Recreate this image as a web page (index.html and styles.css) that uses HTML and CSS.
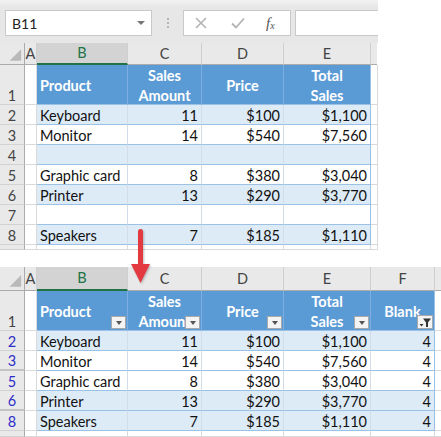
FILE: index.html
```html
<!DOCTYPE html>
<html>
<head>
<meta charset="utf-8">
<link rel="stylesheet" href="styles.css">
</head>
<body>
<div class="toolbar">
  <div class="namebox"><span>B11</span><span class="caret"></span></div>
  <div class="grip"><i></i><i></i><i></i></div>
  <div class="fxbox">
    <svg class="ico-x" width="12" height="12" viewBox="0 0 12 12"><path d="M1 1L11 11M11 1L1 11" stroke="#b3b3b3" stroke-width="1.6" fill="none"/></svg>
    <svg class="ico-ok" width="14" height="12" viewBox="0 0 14 12"><path d="M1 6.5L5 10.5L13 1.5" stroke="#b3b3b3" stroke-width="1.8" fill="none"/></svg>
    <span class="fx">f<sub>x</sub></span>
  </div>
  <div class="formula"></div>
</div>

<div class="sheet top">
  <div class="c corner"><svg width="25" height="22" viewBox="0 0 25 22"><path d="M10 19L22 7V19Z" fill="#b9b9b9"/></svg></div>
  <div class="c ch">A</div>
  <div class="c ch sel">B</div>
  <div class="c ch">C</div>
  <div class="c ch">D</div>
  <div class="c ch">E</div>
  <div class="c ch end"></div>

  <div class="c rh">1</div><div class="c e"></div>
  <div class="c hd l">Product</div><div class="c hd">Sales<br>Amount</div><div class="c hd">Price</div><div class="c hd last">Total<br>Sales</div><div class="c e"></div>

  <div class="c rh">2</div><div class="c e"></div>
  <div class="c d band">Keyboard</div><div class="c d band num">11</div><div class="c d band num">$100</div><div class="c d band num last">$1,100</div><div class="c e"></div>

  <div class="c rh">3</div><div class="c e"></div>
  <div class="c d">Monitor</div><div class="c d num">14</div><div class="c d num">$540</div><div class="c d num last">$7,560</div><div class="c e"></div>

  <div class="c rh">4</div><div class="c e"></div>
  <div class="c d band"></div><div class="c d band"></div><div class="c d band"></div><div class="c d band last"></div><div class="c e"></div>

  <div class="c rh">5</div><div class="c e"></div>
  <div class="c d">Graphic card</div><div class="c d num">8</div><div class="c d num">$380</div><div class="c d num last">$3,040</div><div class="c e"></div>

  <div class="c rh">6</div><div class="c e"></div>
  <div class="c d band">Printer</div><div class="c d band num">13</div><div class="c d band num">$290</div><div class="c d band num last">$3,770</div><div class="c e"></div>

  <div class="c rh">7</div><div class="c e"></div>
  <div class="c d"></div><div class="c d"></div><div class="c d"></div><div class="c d last"></div><div class="c e"></div>

  <div class="c rh">8</div><div class="c e"></div>
  <div class="c d band">Speakers</div><div class="c d band num">7</div><div class="c d band num">$185</div><div class="c d band num last">$1,110</div><div class="c e"></div>

  <div class="c rh"></div><div class="c e"></div><div class="c e"></div><div class="c e"></div><div class="c e"></div><div class="c e"></div><div class="c e"></div>
</div>

<div class="sheet bottom">
  <div class="c corner"><svg width="25" height="24" viewBox="0 0 25 24"><path d="M10 21L22 9V21Z" fill="#b9b9b9"/></svg></div>
  <div class="c ch">A</div>
  <div class="c ch sel">B</div>
  <div class="c ch">C</div>
  <div class="c ch">D</div>
  <div class="c ch">E</div>
  <div class="c ch">F</div>
  <div class="c ch end"></div>

  <div class="c rh">1</div><div class="c e"></div>
  <div class="c hd l">Product<span class="fb"></span></div>
  <div class="c hd">Sales<br>Amount<span class="fb"></span></div>
  <div class="c hd">Price<span class="fb"></span></div>
  <div class="c hd">Total<br>Sales<span class="fb"></span></div>
  <div class="c hd last">Blank<span class="fb on"><svg width="13" height="11" viewBox="0 0 13 11"><path d="M4 1.5H12L9 5.5V10H7V5.5Z" fill="#333"/><path d="M0.5 7H4.5L2.5 9.5Z" fill="#333"/></svg></span></div>
  <div class="c e"></div>

  <div class="c rh blue">2</div><div class="c e"></div>
  <div class="c d band">Keyboard</div><div class="c d band num">11</div><div class="c d band num">$100</div><div class="c d band num">$1,100</div><div class="c d band num last">4</div><div class="c e"></div>

  <div class="c rh blue hid">3</div><div class="c e"></div>
  <div class="c d">Monitor</div><div class="c d num">14</div><div class="c d num">$540</div><div class="c d num">$7,560</div><div class="c d num last">4</div><div class="c e"></div>

  <div class="c rh blue">5</div><div class="c e"></div>
  <div class="c d">Graphic card</div><div class="c d num">8</div><div class="c d num">$380</div><div class="c d num">$3,040</div><div class="c d num last">4</div><div class="c e"></div>

  <div class="c rh blue hid">6</div><div class="c e"></div>
  <div class="c d band">Printer</div><div class="c d band num">13</div><div class="c d band num">$290</div><div class="c d band num">$3,770</div><div class="c d band num last">4</div><div class="c e"></div>

  <div class="c rh blue">8</div><div class="c e"></div>
  <div class="c d band">Speakers</div><div class="c d band num">7</div><div class="c d band num">$185</div><div class="c d band num">$1,110</div><div class="c d band num last">4</div><div class="c e"></div>

  <div class="c rh"></div><div class="c e"></div><div class="c e"></div><div class="c e"></div><div class="c e"></div><div class="c e"></div><div class="c e"></div><div class="c e"></div>
</div>

<svg class="arrow" width="26" height="62" viewBox="0 0 26 62"><rect x="10" y="3" width="5" height="42" rx="2.5" fill="#e23a40"/><path d="M3 38H22L12.5 57Z" fill="#e23a40"/></svg>
</body>
</html>
```

FILE: styles.css
```css
body {
  margin: 0;
  width: 441px;
  height: 437px;
  overflow: hidden;
  position: relative;
  background: #fff;
  font-family: Lato, "Liberation Sans", sans-serif;
}

.toolbar {
  width: 378px;
  height: 43px;
  box-sizing: border-box;
  padding: 10px 0 0 5px;
  display: flex;
  align-items: flex-start;
  background: linear-gradient(#f3f3f3, #e7e7e7 15%, #e7e7e7);
}

.namebox {
  width: 147px;
  height: 26px;
  box-sizing: border-box;
  background: #fff;
  border: 1px solid #c9c9c9;
  display: flex;
  align-items: center;
  justify-content: space-between;
  padding: 0 6px 0 6px;
  font-size: 14px;
  color: #222;
}

.caret {
  width: 0;
  height: 0;
  border-left: 4px solid transparent;
  border-right: 4px solid transparent;
  border-top: 4px solid #777;
}

.grip {
  width: 31px;
  height: 26px;
  display: flex;
  flex-direction: column;
  align-items: center;
  justify-content: center;
  gap: 2px;
}

.grip i {
  width: 2px;
  height: 2px;
  background: #b5b5b5;
}

.fxbox {
  width: 108px;
  height: 26px;
  box-sizing: border-box;
  background: #fff;
  border: 1px solid #c9c9c9;
  display: flex;
  align-items: center;
  padding-left: 11px;
}

.ico-x { margin-right: 24px; }
.ico-ok { margin-right: 21px; }

.fx {
  font-family: "Liberation Serif", serif;
  font-style: italic;
  font-size: 15px;
  color: #555;
}

.fx sub {
  font-size: 10px;
  vertical-align: -1px;
}

.formula {
  margin-left: 4px;
  width: 83px;
  height: 26px;
  box-sizing: border-box;
  background: #fff;
  border: 1px solid #c9c9c9;
  border-right: none;
}

.sheet {
  display: grid;
}

.sheet.top {
  width: 377px;
  grid-template-columns: 25px 12px 91px 74px 82px 87px 6px;
  grid-template-rows: 22px 40px repeat(7, 20px) 5px;
}

.sheet.bottom {
  margin-top: 17px;
  grid-template-columns: 25px 12px 91px 74px 82px 87px 64px 6px;
  grid-template-rows: 24px 40px repeat(5, 20px) 6px;
}

.c {
  position: relative;
  box-sizing: border-box;
  border-right: 1px solid #dadada;
  border-bottom: 1px solid #dadada;
  display: flex;
  align-items: flex-end;
  padding: 0 3px;
  font-size: 14.5px;
  line-height: 16px;
  color: #111;
  white-space: nowrap;
  overflow: hidden;
}

.corner {
  padding: 0;
  background: #e9e9e9;
  border-right: 1px solid #ababab;
  border-bottom: 1px solid #ababab;
}

.ch {
  background: #e9e9e9;
  border-right: 1px solid #cfcfcf;
  border-bottom: 1px solid #ababab;
  justify-content: center;
  align-items: center;
  color: #444;
  padding: 0;
}

.ch.sel {
  background: #d3d3d3;
  border-bottom: 2px solid #217346;
  color: #217346;
}

.ch.end {
  border-right: none;
}

.rh {
  background: #e9e9e9;
  border-right: 1px solid #ababab;
  border-bottom: 1px solid #d2d2d2;
  justify-content: center;
  color: #444;
  padding: 0;
}

.rh.blue {
  color: #2d2dc8;
}

.rh.hid {
  border-bottom: 2px solid #c4c4c4;
}

.hd {
  background: #5b9bd5;
  color: #fff;
  font-weight: bold;
  border-right: 1px solid #7daedf;
  border-bottom: 1px solid #9bc2e6;
  align-items: center;
  justify-content: center;
  text-align: center;
  line-height: 20px;
  padding-top: 2px;
}

.hd.l {
  justify-content: flex-start;
}

.hd.last {
  border-right: 1px solid #9bc2e6;
}

.d {
  border-bottom: 1px solid #9bc2e6;
  border-right: 1px solid #d3dde9;
}

.d.band {
  background: #ddebf7;
}

.d.num {
  justify-content: flex-end;
}

.d.last {
  border-right: 1px solid #9bc2e6;
}

.fb {
  position: absolute;
  right: 1px;
  bottom: 1px;
  width: 15px;
  height: 13px;
  box-sizing: border-box;
  background: #f4f4f4;
  border: 1px solid #a9a9a9;
  display: flex;
  align-items: center;
  justify-content: center;
}

.fb::after {
  content: "";
  width: 0;
  height: 0;
  border-left: 3.5px solid transparent;
  border-right: 3.5px solid transparent;
  border-top: 4px solid #555;
}

.fb.on {
  width: 16px;
  height: 14px;
}

.fb.on::after {
  display: none;
}

.arrow {
  position: absolute;
  left: 128px;
  top: 226px;
  filter: drop-shadow(1px 1px 1px rgba(0, 0, 0, 0.25));
}
```
